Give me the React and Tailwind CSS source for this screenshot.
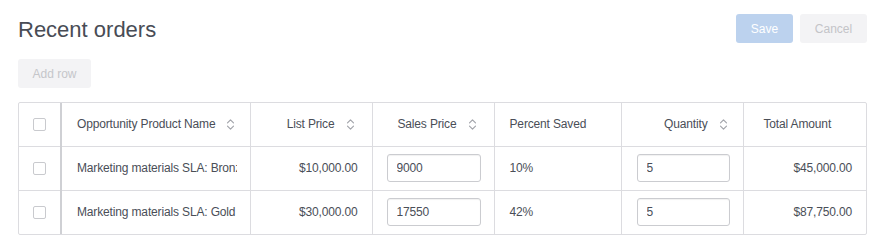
import React from 'react';

const font = { fontFamily: '"Liberation Sans", Arial, sans-serif' };

function SortIcon() {
  return (
    <svg width="9" height="13" viewBox="0 0 9 13" className="shrink-0" fill="none">
      <path d="M1.5 4.8 L4.5 1.8 L7.5 4.8" stroke="#a3a5ab" strokeWidth="1.2" strokeLinecap="round" strokeLinejoin="round" />
      <path d="M1.5 8.2 L4.5 11.2 L7.5 8.2" stroke="#a3a5ab" strokeWidth="1.2" strokeLinecap="round" strokeLinejoin="round" />
    </svg>
  );
}

function Checkbox() {
  return <div className="mx-auto w-[13px] h-[13px] rounded-[2px] border border-[#c9cace] bg-white" />;
}

const rows = [
  { name: 'Marketing materials SLA: Bronze', list: '$10,000.00', sales: '9000', pct: '10%', qty: '5', total: '$45,000.00' },
  { name: 'Marketing materials SLA: Gold', list: '$30,000.00', sales: '17550', pct: '42%', qty: '5', total: '$87,750.00' },
];

export default function App() {
  return (
    <div style={font} className="w-[878px] h-[243px] bg-white pl-[18px] pr-[11px] pt-[14px] text-[#4a4e57]">
      <div className="flex justify-between items-start h-[29px]">
        <h1 className="text-[22px] leading-[29px] mt-[1px] text-[#484c55]">Recent orders</h1>
        <div className="flex gap-[7px]">
          <button className="w-[57px] h-[29px] rounded-[3px] bg-[#bcd2ee] text-white text-[12px]">Save</button>
          <button className="w-[67px] h-[29px] rounded-[3px] bg-[#f3f3f5] text-[#c3c4c8] text-[12px]">Cancel</button>
        </div>
      </div>

      <button className="mt-[16px] w-[73px] h-[29px] rounded-[3px] bg-[#f3f3f5] text-[#c5c6ca] text-[12px]">Add row</button>

      <div className="mt-[14px] w-[849px] border border-[#dcdce0] rounded-[2px] overflow-hidden">
        <table className="table-fixed border-collapse w-[847px] text-[12px] tracking-[-0.15px]">
          <colgroup>
            <col className="w-[42px]" />
            <col className="w-[189px]" />
            <col className="w-[122px]" />
            <col className="w-[122px]" />
            <col className="w-[127px]" />
            <col className="w-[122px]" />
            <col className="w-[123px]" />
          </colgroup>
          <thead>
            <tr className="h-[43px] border-b border-[#dcdce0]">
              <th className="border-r-2 border-[#cfd0d4] p-0 font-normal"><Checkbox /></th>
              <th className="border-r border-[#dcdce0] pl-[15px] pr-[12px] font-normal text-left">
                <div className="flex items-center gap-[11px] whitespace-nowrap"><span>Opportunity Product Name</span><SortIcon /></div>
              </th>
              <th className="border-r border-[#dcdce0] pr-[17px] font-normal">
                <div className="flex items-center justify-end gap-[11px]"><span>List Price</span><SortIcon /></div>
              </th>
              <th className="border-r border-[#dcdce0] pr-[17px] font-normal">
                <div className="flex items-center justify-end gap-[11px]"><span>Sales Price</span><SortIcon /></div>
              </th>
              <th className="border-r border-[#dcdce0] pl-[15px] font-normal text-left">Percent Saved</th>
              <th className="border-r border-[#dcdce0] pr-[15px] font-normal">
                <div className="flex items-center justify-end gap-[11px]"><span>Quantity</span><SortIcon /></div>
              </th>
              <th className="pl-[20px] font-normal text-left">Total Amount</th>
            </tr>
          </thead>
          <tbody>
            {rows.map((r, i) => (
              <tr key={i} className={`h-[44px] ${i === 0 ? 'border-b border-[#dcdce0]' : ''}`}>
                <td className="border-r-2 border-[#cfd0d4] p-0"><Checkbox /></td>
                <td className="border-r border-[#dcdce0] pl-[15px] pr-[13px]">
                  <div className="overflow-hidden whitespace-nowrap">{r.name}</div>
                </td>
                <td className="border-r border-[#dcdce0] pr-[14px] text-right">{r.list}</td>
                <td className="border-r border-[#dcdce0] pl-[14px]">
                  <input
                    readOnly
                    value={r.sales}
                    className="block w-[94px] h-[28px] rounded-[3px] border border-[#cbccd0] px-[9px] text-[12px] text-[#4a4e57] shadow-[inset_0_1px_1px_rgba(0,0,0,0.06)] outline-none"
                  />
                </td>
                <td className="border-r border-[#dcdce0] pl-[15px]">{r.pct}</td>
                <td className="border-r border-[#dcdce0] pl-[15px]">
                  <input
                    readOnly
                    value={r.qty}
                    className="block w-[93px] h-[28px] rounded-[3px] border border-[#cbccd0] px-[9px] text-[12px] text-[#4a4e57] shadow-[inset_0_1px_1px_rgba(0,0,0,0.06)] outline-none"
                  />
                </td>
                <td className="pr-[14px] text-right">{r.total}</td>
              </tr>
            ))}
          </tbody>
        </table>
      </div>
    </div>
  );
}
